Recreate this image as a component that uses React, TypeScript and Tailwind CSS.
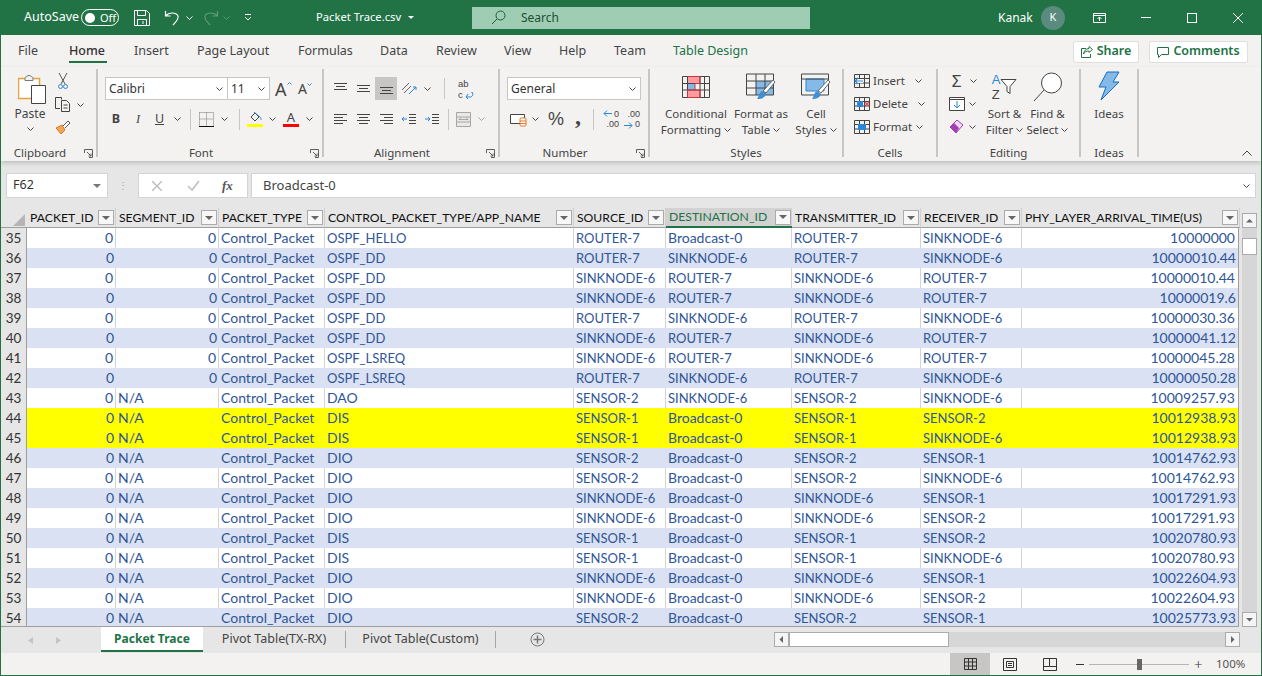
import React from "react";

type Row = [number, string, string, string, string, string, string, string];

const gridCols =
  "grid grid-cols-[27px_89px_103px_106px_249px_92px_126px_129px_101px_218px]";

const rows: Row[] = [
  [35, "0", "OSPF_HELLO", "ROUTER-7", "Broadcast-0", "ROUTER-7", "SINKNODE-6", "10000000"],
  [36, "0", "OSPF_DD", "ROUTER-7", "SINKNODE-6", "ROUTER-7", "SINKNODE-6", "10000010.44"],
  [37, "0", "OSPF_DD", "SINKNODE-6", "ROUTER-7", "SINKNODE-6", "ROUTER-7", "10000010.44"],
  [38, "0", "OSPF_DD", "SINKNODE-6", "ROUTER-7", "SINKNODE-6", "ROUTER-7", "10000019.6"],
  [39, "0", "OSPF_DD", "ROUTER-7", "SINKNODE-6", "ROUTER-7", "SINKNODE-6", "10000030.36"],
  [40, "0", "OSPF_DD", "SINKNODE-6", "ROUTER-7", "SINKNODE-6", "ROUTER-7", "10000041.12"],
  [41, "0", "OSPF_LSREQ", "SINKNODE-6", "ROUTER-7", "SINKNODE-6", "ROUTER-7", "10000045.28"],
  [42, "0", "OSPF_LSREQ", "ROUTER-7", "SINKNODE-6", "ROUTER-7", "SINKNODE-6", "10000050.28"],
  [43, "N/A", "DAO", "SENSOR-2", "SINKNODE-6", "SENSOR-2", "SINKNODE-6", "10009257.93"],
  [44, "N/A", "DIS", "SENSOR-1", "Broadcast-0", "SENSOR-1", "SENSOR-2", "10012938.93"],
  [45, "N/A", "DIS", "SENSOR-1", "Broadcast-0", "SENSOR-1", "SINKNODE-6", "10012938.93"],
  [46, "N/A", "DIO", "SENSOR-2", "Broadcast-0", "SENSOR-2", "SENSOR-1", "10014762.93"],
  [47, "N/A", "DIO", "SENSOR-2", "Broadcast-0", "SENSOR-2", "SINKNODE-6", "10014762.93"],
  [48, "N/A", "DIO", "SINKNODE-6", "Broadcast-0", "SINKNODE-6", "SENSOR-1", "10017291.93"],
  [49, "N/A", "DIO", "SINKNODE-6", "Broadcast-0", "SINKNODE-6", "SENSOR-2", "10017291.93"],
  [50, "N/A", "DIS", "SENSOR-1", "Broadcast-0", "SENSOR-1", "SENSOR-2", "10020780.93"],
  [51, "N/A", "DIS", "SENSOR-1", "Broadcast-0", "SENSOR-1", "SINKNODE-6", "10020780.93"],
  [52, "N/A", "DIO", "SINKNODE-6", "Broadcast-0", "SINKNODE-6", "SENSOR-1", "10022604.93"],
  [53, "N/A", "DIO", "SINKNODE-6", "Broadcast-0", "SINKNODE-6", "SENSOR-2", "10022604.93"],
  [54, "N/A", "DIO", "SENSOR-2", "Broadcast-0", "SENSOR-2", "SENSOR-1", "10025773.93"],
];

const headers = [
  "PACKET_ID",
  "SEGMENT_ID",
  "PACKET_TYPE",
  "CONTROL_PACKET_TYPE/APP_NAME",
  "SOURCE_ID",
  "DESTINATION_ID",
  "TRANSMITTER_ID",
  "RECEIVER_ID",
  "PHY_LAYER_ARRIVAL_TIME(US)",
];

const Chev = ({ color = "#444" }: { color?: string }) => (
  <svg width="7" height="4" viewBox="0 0 7 4" className="shrink-0">
    <path d="M.5.5l3 3 3-3" fill="none" stroke={color} />
  </svg>
);

const Slot = ({ w, children }: { w: string; children?: React.ReactNode }) => (
  <div className={`${w} flex justify-center items-center shrink-0`}>{children}</div>
);

const VSep = () => <div className="w-px h-[21px] bg-[#c8c6c4] shrink-0" />;

const Launcher = () => (
  <svg width="9" height="9" viewBox="0 0 9 9">
    <path d="M.5 4V.5H8.500V8.500H5M3 3l4 4M7 4.500V7H4.500" fill="none" stroke="#605e5c" />
  </svg>
);

const Group = ({
  label,
  w,
  launcher,
  children,
}: {
  label: string;
  w: string;
  launcher?: boolean;
  children: React.ReactNode;
}) => (
  <div className={`${w} shrink-0 h-[88px] flex flex-col border-r-2 border-[#c8c6c4]`}>
    <div className="h-[76px] flex shrink-0">{children}</div>
    <div
      className={`h-[16px] shrink-0 flex items-center justify-center relative text-[11.500px] text-[#444] ${
        launcher ? "pr-[18px]" : ""
      }`}
    >
      {label}
      {launcher && (
        <span className="absolute right-[3px] top-[4px] flex">
          <Launcher />
        </span>
      )}
    </div>
  </div>
);

const BigBtn = ({
  w,
  icon,
  l1,
  l2,
}: {
  w: string;
  icon: React.ReactNode;
  l1: string;
  l2: string;
}) => (
  <div className={`${w} shrink-0 flex flex-col items-center`}>
    <div className="h-[35px] flex items-center justify-center">{icon}</div>
    <div className="h-[16px] mt-[2px] leading-[16px] text-[11.500px] text-[#444] whitespace-nowrap">{l1}</div>
    <div className="h-[16px] leading-[16px] text-[11.500px] text-[#444] flex items-center gap-[3px] whitespace-nowrap">
      {l2}
      <Chev />
    </div>
  </div>
);

const Combo = ({ w, text, cls = "" }: { w: string; text: string; cls?: string }) => (
  <div
    className={`${w} ${cls} h-[23px] bg-white border border-[#c8c6c4] flex items-center justify-between pl-[3px] pr-[4px] text-[12px] text-[#333]`}
  >
    <span>{text}</span>
    <Chev />
  </div>
);

const AlignIcon = ({ d }: { d: string }) => (
  <svg width="15" height="15" viewBox="0 0 15 15">
    <path d={d} fill="none" stroke="#444" />
  </svg>
);

const SmallRow = ({
  icon,
  label,
  gap,
}: {
  icon: React.ReactNode;
  label: string;
  gap: string;
}) => (
  <div className="h-[23px] flex items-center text-[11.500px] text-[#444]">
    <div className="w-[18px] flex justify-center">{icon}</div>
    <span className="ml-[2px]">{label}</span>
    <span className={`${gap} flex`}>
      <Chev />
    </span>
  </div>
);

const GridIcon = ({ children }: { children?: React.ReactNode }) => (
  <svg width="16" height="14" viewBox="0 0 16 14">
    <path d="M.5.5h15v13H.5zM.5 4.500h15M.5 9h15M5.500.5v13M10.500.5v13" fill="none" stroke="#444" />
    {children}
  </svg>
);

const BrushIcon = ({ children }: { children: React.ReactNode }) => (
  <svg width="30" height="28" viewBox="0 0 30 28">
    {children}
    <path d="M27 7l2 2-9 11-3-2z" fill="#fff" stroke="#666" />
    <path d="M16 18l4 3c-1 4-5 5-9 5 2-2 2-7 5-8z" fill="#3f8fd2" />
  </svg>
);

function TitleBar() {
  return (
    <div className="h-[35px] bg-[#217346] flex items-center text-white text-[12.500px] shrink-0">
      <span className="ml-[24px] w-[51px]">AutoSave</span>
      <div className="ml-[6px] w-[38px] h-[17px] rounded-full border border-white flex items-center pl-[3px] gap-[5px]">
        <span className="w-[10px] h-[10px] rounded-full bg-white" />
        <span className="text-[11px] leading-none">Off</span>
      </div>
      <svg className="ml-[15px]" width="16" height="16" viewBox="0 0 16 16">
        <path d="M.5.5h12l3 3v12H.5zM3.500.5v5h8v-5M3.500 15.500v-6h9v6M9 11v3" fill="none" stroke="#fff" />
      </svg>
      <svg className="ml-[14px]" width="17" height="16" viewBox="0 0 17 16">
        <path d="M1.500 1v5h5M1.500 6C5 2 12 2 14 6c1 3-2 6-5 9" fill="none" stroke="#fff" strokeWidth="1.200" />
      </svg>
      <span className="ml-[5px] flex">
        <Chev color="#fff" />
      </span>
      <svg className="ml-[9px]" width="17" height="16" viewBox="0 0 17 16">
        <path d="M15.500 1v5h-5M15.500 6C12 2 5 2 3 6c-1 3 2 6 5 9" fill="none" stroke="#5d9a78" strokeWidth="1.200" />
      </svg>
      <span className="ml-[4px] flex">
        <Chev color="#5d9a78" />
      </span>
      <svg className="ml-[14px]" width="8" height="7" viewBox="0 0 8 7">
        <path d="M1 .5h6M1 3l3 3 3-3" fill="none" stroke="#fff" />
      </svg>
      <span className="ml-[64px] w-[85px] whitespace-nowrap text-[11.200px]">Packet Trace.csv</span>
      <span className="ml-[7px] w-0 h-0 border-x-[3px] border-x-transparent border-t-[3px] border-t-white" />
      <div className="ml-[58px] w-[338px] h-[22px] bg-[#9fcdb3] flex items-center text-[#1e4e33] text-[12px]">
        <svg className="ml-[19px]" width="15" height="15" viewBox="0 0 15 15">
          <circle cx="9.500" cy="5.500" r="4.500" fill="none" stroke="#1e5c3a" />
          <path d="M6 9l-5 5" stroke="#1e5c3a" />
        </svg>
        <span className="ml-[15px]">Search</span>
      </div>
      <span className="ml-[188px] w-[33px] text-[12px]">Kanak</span>
      <div className="ml-[10px] w-[24px] h-[24px] rounded-full bg-[#5b8a7e] flex items-center justify-center text-[11px]">K</div>
      <svg className="ml-[28px]" width="13" height="10" viewBox="0 0 13 10">
        <path d="M.5.5h12v9H.5zM.5 2.500h12M6.500 8V4M4.500 6l2-2 2 2" fill="none" stroke="#fff" />
      </svg>
      <div className="ml-[35px] w-[10px] h-px bg-white" />
      <div className="ml-[36px] w-[10px] h-[10px] border border-white" />
      <svg className="ml-[36px]" width="10" height="10" viewBox="0 0 10 10">
        <path d="M0 0l10 10M10 0L0 10" stroke="#fff" />
      </svg>
    </div>
  );
}

function RibbonTabs() {
  const tab = "text-[12.500px] text-[#444] whitespace-nowrap";
  return (
    <div className="h-[32px] flex items-center pt-[1px] shrink-0">
      <span className={`${tab} ml-[17px] w-[51px]`}>File</span>
      <div className="w-[38px] h-[32px] relative flex items-center">
        <span className="text-[12.500px] text-[#333] font-medium">Home</span>
        <span className="absolute left-0 right-0 bottom-[5px] h-[2px] bg-[#217346]" />
      </div>
      <span className={`${tab} ml-[27px] w-[63px]`}>Insert</span>
      <span className={`${tab} w-[101px]`}>Page Layout</span>
      <span className={`${tab} w-[82px]`}>Formulas</span>
      <span className={`${tab} w-[56px]`}>Data</span>
      <span className={`${tab} w-[68px]`}>Review</span>
      <span className={`${tab} w-[55px]`}>View</span>
      <span className={`${tab} w-[55px]`}>Help</span>
      <span className={`${tab} w-[59px]`}>Team</span>
      <span className="text-[12.500px] text-[#217346] whitespace-nowrap w-[400px]">Table Design</span>
      <div className="w-[66px] h-[22px] bg-white border border-[#e1dfdd] rounded-[2px] flex items-center justify-center gap-[4px] text-[12.500px] font-semibold text-[#217346]">
        <svg width="12" height="12" viewBox="0 0 12 12">
          <path d="M8 .5l3.500 3L8 6.500V5C5 5 3.500 6 2.500 8 3 5 5 2.500 8 2.500zM5 2.500H.5v9h9V8" fill="none" stroke="#217346" />
        </svg>
        Share
      </div>
      <div className="ml-[10px] w-[99px] h-[22px] bg-white border border-[#e1dfdd] rounded-[2px] flex items-center justify-center gap-[4px] text-[12.500px] font-semibold text-[#217346]">
        <svg width="12" height="12" viewBox="0 0 12 12">
          <path d="M.5 1.500h11v7h-7l-3 3v-3h-1z" fill="none" stroke="#217346" />
        </svg>
        Comments
      </div>
    </div>
  );
}

function ClipboardGroup() {
  return (
    <Group label="Clipboard" w="w-[96px]" launcher>
      <div className="w-[52px] ml-[2px] mr-[1px] flex flex-col items-center">
        <svg className="mt-[5px] ml-[4px]" width="28" height="30" viewBox="0 0 28 30">
          <path d="M.5 4.500h21v20H.5z" fill="#fff" stroke="#e8a33d" strokeWidth="1.500" />
          <path d="M7 4.500c0-2 2-1.500 3-3 1 0 1 0 2 0 1 1.500 3 1 3 3v2H7z" fill="#f3f2f1" stroke="#777" />
          <path d="M13.500 11.500h14v18h-14z" fill="#fff" stroke="#444" />
        </svg>
        <span className="mt-[2px] text-[12px] text-[#444] leading-[16px]">Paste</span>
        <span className="mt-[5px] flex">
          <Chev />
        </span>
      </div>
      <div className="flex flex-col">
        <div className="h-[23px] mt-[1px] flex items-center pl-[1px]">
          <svg width="10" height="17" viewBox="0 0 10 17">
            <path d="M1 0l6 11M9 0L3 11" stroke="#555" fill="none" />
            <circle cx="2.500" cy="13.500" r="2" fill="none" stroke="#2b88d8" />
            <circle cx="7.500" cy="13.500" r="2" fill="none" stroke="#2b88d8" />
          </svg>
        </div>
        <div className="h-[23px] flex items-center -ml-[2px] gap-[6px]">
          <svg width="16" height="15" viewBox="0 0 16 15">
            <path d="M5 11.500H.5V.5h6v2M6.500 3.500h5l3 3v8h-8zM8.500 8h4M8.500 11h4" fill="none" stroke="#444" />
          </svg>
          <Chev />
        </div>
        <div className="h-[23px] flex items-center -ml-[2px]">
          <svg width="16" height="15" viewBox="0 0 16 15">
            <path d="M1 8l5 6 4-4-3-5z" fill="#f2a65a" stroke="#d97b1f" />
            <path d="M8 6l5-5 2 2-5 5" fill="#fff" stroke="#555" />
          </svg>
        </div>
      </div>
    </Group>
  );
}

function FontGroup() {
  return (
    <Group label="Font" w="w-[226px]" launcher>
      <div className="pl-[7px] flex flex-col">
        <div className="flex items-center mt-[8px]">
          <Combo w="w-[123px]" text="Calibri" />
          <Combo w="w-[43px]" text="11" cls="-ml-px" />
          <div className="ml-[5px] w-[23px] flex items-start">
            <span className="text-[18px] leading-none text-[#444]">A</span>
            <svg className="mt-[2px]" width="5" height="3" viewBox="0 0 5 3">
              <path d="M.5 2.500l2-2 2 2" fill="none" stroke="#2b88d8" />
            </svg>
          </div>
          <div className="flex items-start">
            <span className="text-[14px] leading-none text-[#444]">A</span>
            <svg className="mt-[1px]" width="5" height="3" viewBox="0 0 5 3">
              <path d="M.5.5l2 2 2-2" fill="none" stroke="#2b88d8" />
            </svg>
          </div>
        </div>
        <div className="flex items-center mt-[8px] h-[22px] text-[#444]">
          <Slot w="w-[22px]">
            <b className="text-[12.500px]">B</b>
          </Slot>
          <Slot w="w-[22px]">
            <i className="text-[12.500px] font-['Liberation_Serif',serif]">I</i>
          </Slot>
          <Slot w="w-[21px]">
            <u className="text-[12.500px]">U</u>
          </Slot>
          <Slot w="w-[14px]">
            <Chev />
          </Slot>
          <Slot w="w-[13px]">
            <VSep />
          </Slot>
          <Slot w="w-[18px]">
            <svg width="15" height="15" viewBox="0 0 15 15">
              <path d="M.5.5h14v14" fill="none" stroke="#777" strokeDasharray="1 1" />
              <path d="M.5.5v13M7.500.5v13M.5 7h14" fill="none" stroke="#777" strokeDasharray="1 1" />
              <path d="M0 14.500h15" stroke="#111" />
            </svg>
          </Slot>
          <Slot w="w-[18px]">
            <Chev />
          </Slot>
          <Slot w="w-[13px]">
            <VSep />
          </Slot>
          <Slot w="w-[18px]">
            <svg width="16" height="16" viewBox="0 0 16 16">
              <path d="M4 6l4-4 4 4-4 4z" fill="none" stroke="#444" />
              <path d="M7 1l6 5c1 1 1 2 1 3" fill="none" stroke="#2b88d8" />
              <path d="M0 13h16v3H0z" fill="#ffff00" />
            </svg>
          </Slot>
          <Slot w="w-[17px]">
            <Chev />
          </Slot>
          <Slot w="w-[20px]">
            <div className="flex flex-col items-center">
              <span className="text-[13px] leading-[13px]">A</span>
              <span className="w-[16px] h-[3px] bg-[#ff0000]" />
            </div>
          </Slot>
          <Slot w="w-[17px]">
            <Chev />
          </Slot>
        </div>
      </div>
    </Group>
  );
}

function AlignmentGroup() {
  return (
    <Group label="Alignment" w="w-[176px]" launcher>
      <div className="pl-[5px] flex flex-col">
        <div className="flex items-center mt-[8px] h-[23px]">
          <Slot w="w-[22px]">
            <AlignIcon d="M1 2.500h13M3 5.500h9M1 8.500h13" />
          </Slot>
          <Slot w="w-[24px]">
            <AlignIcon d="M1 4.500h13M3 7.500h9M1 10.500h13" />
          </Slot>
          <div className="w-[22px] h-[23px] bg-[#c8c6c4] flex items-center justify-center">
            <AlignIcon d="M1 6.500h13M3 9.500h9M1 12.500h13" />
          </div>
          <Slot w="w-[24px]">
            <svg width="16" height="15" viewBox="0 0 16 15">
              <path d="M1 9l7-7M3 12l7-7" fill="none" stroke="#666" />
              <path d="M8 13l7-7M12 6h3v3" fill="none" stroke="#2b88d8" />
            </svg>
          </Slot>
          <Slot w="w-[13px]">
            <Chev />
          </Slot>
          <Slot w="w-[21px]">
            <VSep />
          </Slot>
          <Slot w="w-[22px]">
            <div className="relative w-[16px] font-['Liberation_Sans',sans-serif] text-[9.500px] leading-[11px] text-[#444]">
              <div>ab</div>
              <div>c</div>
              <svg className="absolute right-0 bottom-0" width="9" height="8" viewBox="0 0 9 8">
                <path d="M6 0h1c2 3 0 5-2 5H1M3 2L1 5l2 2" fill="none" stroke="#2b88d8" />
              </svg>
            </div>
          </Slot>
        </div>
        <div className="flex items-center mt-[8px] h-[22px]">
          <Slot w="w-[22px]">
            <AlignIcon d="M1 2.500h13M1 5.500h9M1 8.500h13M1 11.500h9" />
          </Slot>
          <Slot w="w-[24px]">
            <AlignIcon d="M1 2.500h13M3 5.500h9M1 8.500h13M3 11.500h9" />
          </Slot>
          <Slot w="w-[22px]">
            <AlignIcon d="M1 2.500h13M5 5.500h9M1 8.500h13M5 11.500h9" />
          </Slot>
          <Slot w="w-[24px]">
            <svg width="15" height="15" viewBox="0 0 15 15">
              <path d="M7 2.500h7M7 5.500h7M7 8.500h7M7 11.500h7" stroke="#444" />
              <path d="M5 7H0M2 5L0 7l2 2" fill="none" stroke="#2b88d8" />
            </svg>
          </Slot>
          <Slot w="w-[23px]">
            <svg width="15" height="15" viewBox="0 0 15 15">
              <path d="M7 2.500h7M7 5.500h7M7 8.500h7M7 11.500h7" stroke="#444" />
              <path d="M0 7h5M3 5l2 2-2 2" fill="none" stroke="#2b88d8" />
            </svg>
          </Slot>
          <Slot w="w-[9px]">
            <VSep />
          </Slot>
          <Slot w="w-[20px]">
            <svg width="15" height="15" viewBox="0 0 15 15">
              <path d="M.5.5h14v14H.5zM.5 5h14M.5 10h14M3 7.500h9M3 7.500l2-2M12 7.500l-2-2" fill="#e8e8e8" stroke="#a6a6a6" />
            </svg>
          </Slot>
          <Slot w="w-[16px]">
            <Chev color="#a6a6a6" />
          </Slot>
        </div>
      </div>
    </Group>
  );
}

function NumberGroup() {
  return (
    <Group label="Number" w="w-[150px]" launcher>
      <div className="pl-[7px] flex flex-col">
        <div className="mt-[8px]">
          <Combo w="w-[134px]" text="General" />
        </div>
        <div className="flex items-center mt-[8px] h-[22px] text-[#444]">
          <Slot w="w-[22px]">
            <svg width="17" height="15" viewBox="0 0 17 15">
              <path d="M.5 2.500h14v9H.5z" fill="#fff" stroke="#444" />
              <rect x="10" y="6" width="6" height="8" rx="1" fill="#fff" stroke="#e07b2a" />
              <path d="M10 9h6M10 11.500h6" stroke="#e07b2a" />
            </svg>
          </Slot>
          <Slot w="w-[13px]">
            <Chev />
          </Slot>
          <Slot w="w-[28px]">
            <span className="text-[18px] leading-none font-['Liberation_Sans',sans-serif]">%</span>
          </Slot>
          <Slot w="w-[16px]">
            <span className="text-[24px] leading-none font-bold font-['Liberation_Serif',serif] -mt-[6px]">,</span>
          </Slot>
          <Slot w="w-[15px]">
            <VSep />
          </Slot>
          <Slot w="w-[20px]">
            <div className="relative font-['Liberation_Sans',sans-serif] text-[9px] leading-[10.500px] text-right w-[16px]">
              <div>0</div>
              <div>.00</div>
              <svg className="absolute left-0 top-[1px]" width="9" height="7" viewBox="0 0 9 7">
                <path d="M9 3.500H1M4 .5l-3 3 3 3" fill="none" stroke="#2b88d8" />
              </svg>
            </div>
          </Slot>
          <Slot w="w-[22px]">
            <div className="relative font-['Liberation_Sans',sans-serif] text-[9px] leading-[10.500px] text-right w-[16px]">
              <div>.00</div>
              <div>0</div>
              <svg className="absolute left-0 bottom-[1px]" width="9" height="7" viewBox="0 0 9 7">
                <path d="M0 3.500h8M5 .5l3 3-3 3" fill="none" stroke="#2b88d8" />
              </svg>
            </div>
          </Slot>
        </div>
      </div>
    </Group>
  );
}

function StylesGroup() {
  return (
    <Group label="Styles" w="w-[194px]">
      <div className="pl-[14px] flex">
        <BigBtn
          w="w-[64px]"
          l1="Conditional"
          l2="Formatting"
          icon={
            <svg width="28" height="22" viewBox="0 0 28 22">
              <path d="M5 .5h13v7H5zM5 14h13v7.500H5z" fill="#ff9a9f" />
              <path d="M5 7.500h8V14H5z" fill="#84b9e8" />
              <path d="M.5.5h27v21H.5zM.5 7.500h27M.5 14h27M5.500.5v21M18 .5v21M22.500.5v21" fill="none" stroke="#444" />
              <path d="M5.500.5H18v7h-5V14h5v7.500H5.500V14H13" fill="none" stroke="#d13438" />
            </svg>
          }
        />
        <BigBtn
          w="w-[66px]"
          l1="Format as"
          l2="Table"
          icon={
            <BrushIcon>
              <path d="M10 8h18v14H10z" fill="#84b9e8" />
              <path d="M.5 1h27v21H.5zM.5 8h27M.5 15h27M10 1v21M19 1v21" fill="none" stroke="#444" />
            </BrushIcon>
          }
        />
        <BigBtn
          w="w-[44px]"
          l1="Cell"
          l2="Styles"
          icon={
            <BrushIcon>
              <path d="M5 6h18v12H5z" fill="#84b9e8" stroke="#2b88d8" />
              <path d="M.5 1h27v21H.5zM.5 6h27" fill="none" stroke="#444" />
            </BrushIcon>
          }
        />
      </div>
    </Group>
  );
}

function CellsGroup() {
  return (
    <Group label="Cells" w="w-[94px]">
      <div className="pl-[9px] flex flex-col">
        <SmallRow
          label="Insert"
          gap="ml-[10px]"
          icon={
            <GridIcon>
              <path d="M1 5h8v4H1z" fill="#fff" />
              <path d="M9 7H1M4 4L1 7l3 3" fill="none" stroke="#2b88d8" strokeWidth="1.200" />
            </GridIcon>
          }
        />
        <SmallRow
          label="Delete"
          gap="ml-[10px]"
          icon={
            <GridIcon>
              <path d="M3 4h6v6H3z" fill="#2b88d8" />
              <path d="M11 5l4 4M15 5l-4 4" stroke="#e8484d" strokeWidth="1.400" />
            </GridIcon>
          }
        />
        <SmallRow
          label="Format"
          gap="ml-[4px]"
          icon={
            <GridIcon>
              <path d="M4 4h8v6H4z" fill="#2b88d8" />
            </GridIcon>
          }
        />
      </div>
    </Group>
  );
}

function EditingGroup() {
  return (
    <Group label="Editing" w="w-[143px]">
      <div className="pl-[11px] w-[45px] flex flex-col shrink-0">
        <div className="h-[23px] flex items-center gap-[6px]">
          <span className="w-[15px] text-[17px] leading-none text-[#444] text-center">Σ</span>
          <Chev />
        </div>
        <div className="h-[23px] flex items-center gap-[4px]">
          <svg width="16" height="14" viewBox="0 0 16 14">
            <path d="M.5.5h15v13H.5zM.5 2.500h15" fill="#fff" stroke="#444" />
            <path d="M8 4v7M5 8l3 3 3-3" fill="none" stroke="#2b88d8" />
          </svg>
          <Chev />
        </div>
        <div className="h-[23px] flex items-center gap-[5px]">
          <svg width="15" height="15" viewBox="0 0 15 15">
            <path d="M1 8l7-7 6 5-7 8z" fill="#f1d9f5" stroke="#a33fb3" />
            <path d="M1 8l4-4 5 5-3 5z" fill="#a33fb3" />
          </svg>
          <Chev />
        </div>
      </div>
      <BigBtn
        w="w-[43px]"
        l1="Sort &"
        l2="Filter"
        icon={
          <div className="flex items-center">
            <div className="flex flex-col font-['Liberation_Sans',sans-serif] text-[13px] leading-[15px]">
              <span className="text-[#2b88d8]">A</span>
              <span className="text-[#444]">Z</span>
            </div>
            <svg width="17" height="17" viewBox="0 0 17 17">
              <path d="M1 1.500h15l-6 7v7l-3-2v-5z" fill="#fff" stroke="#444" />
            </svg>
          </div>
        }
      />
      <BigBtn
        w="w-[43px]"
        l1="Find &"
        l2="Select"
        icon={
          <svg width="30" height="30" viewBox="0 0 30 30">
            <circle cx="18.500" cy="11" r="10" fill="#fff" stroke="#444" />
            <path d="M11 18L1 29" stroke="#444" />
          </svg>
        }
      />
    </Group>
  );
}

function Ribbon() {
  return (
    <div className="h-[94px] flex items-start pl-[1px] pt-[2px] shrink-0 shadow-[0_2px_4px_rgba(0,0,0,0.18)] relative bg-[#f3f2f1]">
      <ClipboardGroup />
      <FontGroup />
      <AlignmentGroup />
      <NumberGroup />
      <StylesGroup />
      <CellsGroup />
      <EditingGroup />
      <Group label="Ideas" w="w-[58px]">
        <div className="w-full flex flex-col items-center">
          <svg className="mt-[2px]" width="22" height="30" viewBox="0 0 22 30">
            <path d="M9 1h12l-6 10h6L3 29l5-13H1z" fill="#84b9e8" stroke="#106ebe" />
          </svg>
          <span className="mt-[5px] text-[11.500px] text-[#444] leading-[16px]">Ideas</span>
        </div>
      </Group>
      <svg className="ml-[103px] mt-[81px]" width="10" height="6" viewBox="0 0 10 6">
        <path d="M.5 5.500l4.500-4.500 4.500 4.500" fill="none" stroke="#444" />
      </svg>
    </div>
  );
}

function FormulaBar() {
  return (
    <div className="h-[47px] flex items-start pt-[12px] pl-[5px] shrink-0">
      <div className="w-[102px] h-[25px] bg-white border border-[#d4d4d4] flex items-center justify-between pl-[6px] pr-[6px] text-[12.500px] text-[#333]">
        F62
        <span className="w-0 h-0 border-x-[4px] border-x-transparent border-t-[4px] border-t-[#777]" />
      </div>
      <div className="w-[30px] h-[25px] flex items-center justify-center text-[#a6a6a6] text-[10px]">⋮</div>
      <div className="w-[110px] h-[25px] bg-white border border-[#d4d4d4] flex items-center text-[#bdbdbd]">
        <svg className="ml-[13px]" width="10" height="10" viewBox="0 0 10 10">
          <path d="M0 0l10 10M10 0L0 10" stroke="#bdbdbd" strokeWidth="1.400" />
        </svg>
        <svg className="ml-[25px]" width="13" height="11" viewBox="0 0 13 11">
          <path d="M1 6l4 4 7-9" fill="none" stroke="#bdbdbd" strokeWidth="1.500" />
        </svg>
        <i className="ml-[22px] text-[13px] text-[#555] font-['Liberation_Serif',serif] font-bold">fx</i>
      </div>
      <div className="ml-[3px] w-[1005px] h-[25px] bg-white border border-[#d4d4d4] flex items-center justify-between pl-[11px] pr-[5px] text-[13px] text-[#444]">
        Broadcast-0
        <Chev />
      </div>
    </div>
  );
}

function SheetHeader() {
  return (
    <div className={`${gridCols} h-[20px] font-['Lato',sans-serif] text-[12.200px]`}>
      <div className="relative border-b border-[#9f9f9f]">
        <span className="absolute right-[2px] bottom-[1px] w-0 h-0 border-l-[12px] border-l-transparent border-b-[12px] border-b-[#b5b5b5]" />
      </div>
      {headers.map((h) => {
        const active = h === "DESTINATION_ID";
        return (
          <div
            key={h}
            className={
              active
                ? "flex items-center justify-between pl-[3px] pr-px bg-[#d2d2d2] border-b-2 border-[#217346] text-[#217346]"
                : "flex items-center justify-between pl-[3px] pr-px border-b border-[#9f9f9f] border-r border-r-[#d0d0d0] text-[#111]"
            }
          >
            <span className="whitespace-nowrap">{h}</span>
            <span className="w-[16px] h-[15px] bg-[#f7f7f7] border border-[#ababab] flex items-center justify-center">
              <span className="w-0 h-0 border-x-[4px] border-x-transparent border-t-[4px] border-t-[#666]" />
            </span>
          </div>
        );
      })}
    </div>
  );
}

// Lato capitals run wider than the sheet font, so all-caps names get a smaller size
const sizeFor = (s: string) => (/^[A-Z_0-9-]{4,}$/.test(s) && !/^\d+$/.test(s) ? "text-[13px]" : "text-[14px]");

function SheetRow({ row }: { row: Row }) {
  const [num, seg, app, src, dst, tx, rx, time] = row;
  const yellow = num === 44 || num === 45;
  const bg = yellow ? "bg-[#ffff00]" : num % 2 === 0 ? "bg-[#d9e1f2]" : "bg-white";
  const line = !yellow && num % 2 !== 0 ? "border-r border-[#d4d4d4]" : "";
  const cell = `${bg} ${line} px-[2px] whitespace-nowrap overflow-hidden`;
  return (
    <div className={`${gridCols} h-[20px] leading-[20px] font-['Lato',sans-serif] text-[14px] text-[#2f5597]`}>
      <div className="bg-[#e6e6e6] border-b border-[#b5b5b5] border-r border-r-[#9f9f9f] text-center text-[13.500px] text-[#333] pl-[1px]">
        {num}
      </div>
      <div className={`${cell} text-right`}>0</div>
      <div className={`${cell} ${seg === "0" ? "text-right" : ""}`}>{seg}</div>
      <div className={cell}>Control_Packet</div>
      <div className={`${cell} ${sizeFor(app)}`}>{app}</div>
      <div className={`${cell} ${sizeFor(src)}`}>{src}</div>
      <div className={`${cell} ${sizeFor(dst)}`}>{dst}</div>
      <div className={`${cell} ${sizeFor(tx)}`}>{tx}</div>
      <div className={`${cell} ${sizeFor(rx)}`}>{rx}</div>
      <div className={`${cell} text-right pr-[4px]`}>{time}</div>
    </div>
  );
}

const ArrowBtn = ({ d, cls = "" }: { d: string; cls?: string }) => (
  <div className={`${cls} w-[15px] h-[15px] bg-[#f5f5f5] border border-[#ababab] flex items-center justify-center shrink-0`}>
    <svg width="7" height="7" viewBox="0 0 7 7">
      <path d={d} fill="#666" />
    </svg>
  </div>
);

function VScroll() {
  return (
    <div className="w-[22px] flex flex-col items-center pt-[5px] pr-px shrink-0">
      <ArrowBtn d="M0 5.500L3.500 2 7 5.500z" />
      <div className="flex-1 w-[15px] bg-[#d6d6d6] pt-[10px] flex flex-col">
        <div className="h-[17px] bg-white border border-[#ababab]" />
      </div>
      <ArrowBtn d="M0 2l3.500 3.500L7 2z" />
    </div>
  );
}

function SheetTabs() {
  return (
    <div className="h-[26px] flex shrink-0 bg-[#e6e6e6] text-[12.500px] text-[#444] items-start">
      <svg className="ml-[27px] mt-[10px]" width="5" height="7" viewBox="0 0 5 7">
        <path d="M5 0L0 3.500 5 7z" fill="#c4c4c4" />
      </svg>
      <svg className="ml-[23px] mt-[10px]" width="5" height="7" viewBox="0 0 5 7">
        <path d="M0 0l5 3.500L0 7z" fill="#c4c4c4" />
      </svg>
      <div className="ml-[40px] w-[102px] h-[25px] bg-white border-b-2 border-[#217346] flex items-center justify-center font-bold text-[12px] text-[#217346]">
        Packet Trace
      </div>
      <div className="w-[143px] h-[17px] mt-[4px] border-r border-[#a6a6a6] flex items-center justify-center whitespace-nowrap">Pivot Table(TX-RX)</div>
      <div className="w-[150px] h-[17px] mt-[4px] border-r border-[#a6a6a6] flex items-center justify-center whitespace-nowrap">Pivot Table(Custom)</div>
      <svg className="ml-[34px] mt-[5px]" width="15" height="15" viewBox="0 0 15 15">
        <circle cx="7.500" cy="7.500" r="6.500" fill="none" stroke="#777" />
        <path d="M7.500 3.500v8M3.500 7.500h8" stroke="#777" strokeWidth="1.500" />
      </svg>
      <div className="ml-[229px] mt-[5px] w-[466px] h-[15px] bg-[#d6d6d6] flex">
        <ArrowBtn d="M5 0L1.500 3.500 5 7z" />
        <div className="w-[160px] bg-white border border-[#ababab]" />
        <div className="flex-1" />
        <ArrowBtn d="M2 0l3.500 3.500L2 7z" />
      </div>
    </div>
  );
}

function StatusBar() {
  return (
    <div className="h-[22px] flex items-center shrink-0 bg-[#f3f2f1] text-[11.500px] text-[#555]">
      <div className="ml-[949px] w-[40px] h-[22px] bg-[#c8c6c4] flex items-center justify-center">
        <svg width="13" height="12" viewBox="0 0 13 12">
          <path d="M.5.5h12v11H.5zM.5 4h12M.5 8h12M4.500.5v11M8.500.5v11" fill="none" stroke="#333" />
        </svg>
      </div>
      <svg className="ml-[13px]" width="14" height="13" viewBox="0 0 14 13">
        <path d="M.5.5h13v12H.5zM3.500 3.500h7v6h-7zM5 5.500h4M5 7.500h4" fill="none" stroke="#333" />
      </svg>
      <svg className="ml-[26px]" width="14" height="13" viewBox="0 0 14 13">
        <path d="M.5.5h13v12H.5zM.5 8.500h6v-8M6.500 8.500h7" fill="none" stroke="#333" />
      </svg>
      <span className="ml-[19px] w-[8px] h-px bg-[#333]" />
      <div className="ml-[5px] w-[100px] h-px bg-[#b5b5b5] flex items-center justify-center">
        <span className="w-[5px] h-[11px] bg-[#666]" />
      </div>
      <span className="ml-[5px] w-[8px] text-center text-[15px] leading-none text-[#333] font-light">+</span>
      <span className="ml-[14px]">100%</span>
    </div>
  );
}

export default function App() {
  return (
    <div className="w-[1262px] h-[676px] flex flex-col overflow-hidden bg-[#e6e6e6] border-x border-b border-[#217346] font-['Noto_Sans',sans-serif]">
      <div className="-mx-px shrink-0">
        <TitleBar />
      </div>
      <div className="bg-[#f3f2f1] shrink-0 relative">
        <RibbonTabs />
        <Ribbon />
      </div>
      <FormulaBar />
      <div className="flex h-[419px] shrink-0">
        <div className="w-[1239px] flex flex-col -ml-px">
          <SheetHeader />
          <div className="h-[399px] overflow-hidden border-b border-[#9f9f9f] border-r">
            {rows.map((r) => (
              <SheetRow key={r[0]} row={r} />
            ))}
          </div>
        </div>
        <VScroll />
      </div>
      <SheetTabs />
      <StatusBar />
    </div>
  );
}
